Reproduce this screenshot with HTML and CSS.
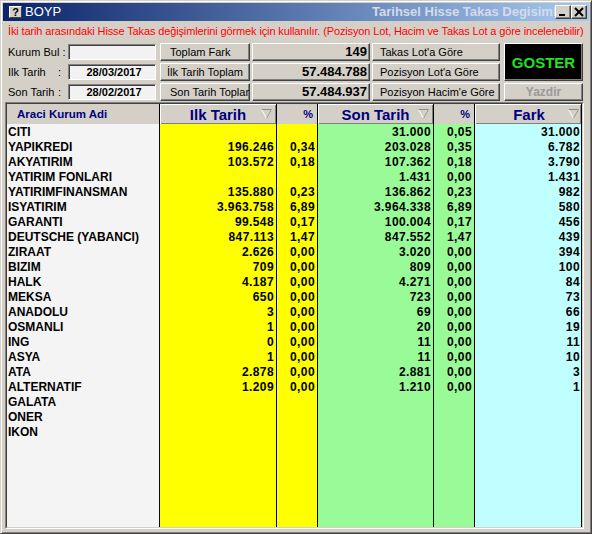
FILE: index.html
```html
<!DOCTYPE html>
<html lang="tr">
<head>
<meta charset="utf-8">
<title>BOYP</title>
<link rel="stylesheet" href="styles.css">
</head>
<body>
<div class="window">
  <div class="titlebar">
    <span class="ticon">?</span>
    <span class="tname">BOYP</span>
    <span class="tspace"></span>
    <span class="tright">Tarihsel Hisse Takas Degisimleri</span>
    <span class="tbtns">
      <span class="tbtn"><svg width="14" height="12" viewBox="0 0 14 12"><rect x="3" y="8" width="6" height="2" fill="#000"/></svg></span>
      <span class="tbtn"><svg width="14" height="12" viewBox="0 0 14 12"><path d="M3 2 L11 10 M11 2 L3 10" stroke="#000" stroke-width="2"/></svg></span>
    </span>
  </div>
  <div class="notice">İki tarih arasındaki Hisse Takas değişimlerini görmek için kullanılır. (Pozisyon Lot, Hacim ve Takas Lot a göre incelenebilir)</div>
  <div class="controls">
    <div class="lbl">Kurum Bul :</div>
    <div class="inp"></div>
    <div class="btn">Toplam Fark</div>
    <div class="val">149</div>
    <div class="opt">Takas Lot'a Göre</div>
    <div class="goster">GOSTER</div>

    <div class="lbl"><span class="lt">Ilk Tarih</span>:</div>
    <div class="inp date">28/03/2017</div>
    <div class="btn b2">İlk Tarih Toplam</div>
    <div class="val">57.484.788</div>
    <div class="opt">Pozisyon Lot'a Göre</div>

    <div class="lbl"><span class="lt">Son Tarih</span>:</div>
    <div class="inp date">28/02/2017</div>
    <div class="btn">Son Tarih Toplam</div>
    <div class="val">57.484.937</div>
    <div class="opt">Pozisyon Hacim'e Göre</div>
    <div class="yazdir">Yazdir</div>
  </div>
  <div class="gridframe">
    <div class="grid">
      <div class="h hn">Araci Kurum Adi</div>
      <div class="h hs"><span class="pad"></span><span class="ht">Ilk Tarih</span><svg class="tri" width="11" height="10" viewBox="0 0 11 10"><path d="M0.5 0.5 H10.5 L5.5 9.5 Z" fill="none" stroke="#fff" stroke-width="1"/><path d="M0.5 0.5 H10.5 L5.5 9.5" fill="none" stroke="#8c8c8c" stroke-width="1"/></svg></div>
      <div class="h hp">%</div>
      <div class="h hs"><span class="pad"></span><span class="ht">Son Tarih</span><svg class="tri" width="11" height="10" viewBox="0 0 11 10"><path d="M0.5 0.5 H10.5 L5.5 9.5 Z" fill="none" stroke="#fff" stroke-width="1"/><path d="M0.5 0.5 H10.5 L5.5 9.5" fill="none" stroke="#8c8c8c" stroke-width="1"/></svg></div>
      <div class="h hp">%</div>
      <div class="h hs hf"><span class="pad"></span><span class="ht">Fark</span><svg class="tri" width="11" height="10" viewBox="0 0 11 10"><path d="M0.5 0.5 H10.5 L5.5 9.5 Z" fill="none" stroke="#fff" stroke-width="1"/><path d="M0.5 0.5 H10.5 L5.5 9.5" fill="none" stroke="#8c8c8c" stroke-width="1"/></svg></div>

      <div class="n">CITI</div><div class="y r"></div><div class="y r"></div><div class="g r">31.000</div><div class="g r">0,05</div><div class="c r">31.000</div>
      <div class="n">YAPIKREDI</div><div class="y r">196.246</div><div class="y r">0,34</div><div class="g r">203.028</div><div class="g r">0,35</div><div class="c r">6.782</div>
      <div class="n">AKYATIRIM</div><div class="y r">103.572</div><div class="y r">0,18</div><div class="g r">107.362</div><div class="g r">0,18</div><div class="c r">3.790</div>
      <div class="n">YATIRIM FONLARI</div><div class="y r"></div><div class="y r"></div><div class="g r">1.431</div><div class="g r">0,00</div><div class="c r">1.431</div>
      <div class="n">YATIRIMFINANSMAN</div><div class="y r">135.880</div><div class="y r">0,23</div><div class="g r">136.862</div><div class="g r">0,23</div><div class="c r">982</div>
      <div class="n">ISYATIRIM</div><div class="y r">3.963.758</div><div class="y r">6,89</div><div class="g r">3.964.338</div><div class="g r">6,89</div><div class="c r">580</div>
      <div class="n">GARANTI</div><div class="y r">99.548</div><div class="y r">0,17</div><div class="g r">100.004</div><div class="g r">0,17</div><div class="c r">456</div>
      <div class="n">DEUTSCHE (YABANCI)</div><div class="y r">847.113</div><div class="y r">1,47</div><div class="g r">847.552</div><div class="g r">1,47</div><div class="c r">439</div>
      <div class="n">ZIRAAT</div><div class="y r">2.626</div><div class="y r">0,00</div><div class="g r">3.020</div><div class="g r">0,00</div><div class="c r">394</div>
      <div class="n">BIZIM</div><div class="y r">709</div><div class="y r">0,00</div><div class="g r">809</div><div class="g r">0,00</div><div class="c r">100</div>
      <div class="n">HALK</div><div class="y r">4.187</div><div class="y r">0,00</div><div class="g r">4.271</div><div class="g r">0,00</div><div class="c r">84</div>
      <div class="n">MEKSA</div><div class="y r">650</div><div class="y r">0,00</div><div class="g r">723</div><div class="g r">0,00</div><div class="c r">73</div>
      <div class="n">ANADOLU</div><div class="y r">3</div><div class="y r">0,00</div><div class="g r">69</div><div class="g r">0,00</div><div class="c r">66</div>
      <div class="n">OSMANLI</div><div class="y r">1</div><div class="y r">0,00</div><div class="g r">20</div><div class="g r">0,00</div><div class="c r">19</div>
      <div class="n">ING</div><div class="y r">0</div><div class="y r">0,00</div><div class="g r">11</div><div class="g r">0,00</div><div class="c r">11</div>
      <div class="n">ASYA</div><div class="y r">1</div><div class="y r">0,00</div><div class="g r">11</div><div class="g r">0,00</div><div class="c r">10</div>
      <div class="n">ATA</div><div class="y r">2.878</div><div class="y r">0,00</div><div class="g r">2.881</div><div class="g r">0,00</div><div class="c r">3</div>
      <div class="n">ALTERNATIF</div><div class="y r">1.209</div><div class="y r">0,00</div><div class="g r">1.210</div><div class="g r">0,00</div><div class="c r">1</div>
      <div class="n">GALATA</div><div class="y r"></div><div class="y r"></div><div class="g r"></div><div class="g r"></div><div class="c r"></div>
      <div class="n">ONER</div><div class="y r"></div><div class="y r"></div><div class="g r"></div><div class="g r"></div><div class="c r"></div>
      <div class="n">IKON</div><div class="y r"></div><div class="y r"></div><div class="g r"></div><div class="g r"></div><div class="c r"></div>

      <div class="n"></div><div class="y"></div><div class="y"></div><div class="g"></div><div class="g"></div><div class="c"></div>
    </div>
  </div>
</div>
</body>
</html>
```
FILE: styles.css
```css
* { box-sizing: border-box; }
html, body { margin: 0; padding: 0; }
body {
  width: 592px;
  height: 534px;
  background: #d4d0c8;
  font-family: "Liberation Sans", Arial, sans-serif;
  overflow: hidden;
}
.window {
  width: 592px;
  height: 534px;
  background: #d4d0c8;
  border: 1px solid;
  border-color: #d4d0c8 #404040 #404040 #d4d0c8;
  box-shadow: inset 1px 1px #fff, inset -1px -1px #808080;
  padding: 2px;
  display: flex;
  flex-direction: column;
}
.titlebar {
  height: 18px;
  flex: none;
  display: flex;
  align-items: center;
  background: linear-gradient(to right, #0a246a, #a6caf0);
  padding-left: 6px;
}
.ticon {
  width: 13px;
  height: 12px;
  background: #d4d0c8;
  border: 1px solid;
  border-color: #fff #404040 #404040 #fff;
  font-size: 11px;
  font-weight: bold;
  line-height: 10px;
  text-align: center;
  color: #000;
}
.tname {
  margin-left: 3px;
  color: #fff;
  font-size: 13px;
  line-height: 18px;
}
.tspace { flex: 1; }
.tright {
  width: 183px;
  overflow: hidden;
  white-space: nowrap;
  color: #d6dbe8;
  font-size: 13px;
  font-weight: bold;
  line-height: 18px;
}
.tbtns {
  display: flex;
  margin-right: 2px;
}
.tbtn {
  width: 16px;
  height: 14px;
  background: #d4d0c8;
  border: 1px solid;
  border-color: #fff #404040 #404040 #fff;
  box-shadow: inset -1px -1px #808080;
  display: flex;
  align-items: center;
  justify-content: center;
}
.tbtn svg { display: block; }
.notice {
  height: 21px;
  flex: none;
  line-height: 20px;
  padding-left: 5px;
  color: #f00;
  font-size: 11px;
  letter-spacing: -0.13px;
  white-space: nowrap;
  overflow: hidden;
}
.controls {
  flex: none;
  margin-top: 1px;
  padding-left: 5px;
  display: grid;
  grid-template-columns: 60px 88px 94px 120px 130px 83px;
  grid-template-rows: 18px 18px 18px;
  row-gap: 2px;
  font-size: 11px;
  color: #000;
}
.lbl {
  line-height: 18px;
  white-space: nowrap;
}
.lt {
  display: inline-block;
  width: 50px;
}
.inp {
  margin: 1px 0;
  background: #f2f2f2;
  border: 1px solid;
  border-color: #808080 #fff #fff #808080;
  box-shadow: inset 1px 1px #404040;
  font-weight: bold;
  text-align: center;
  line-height: 14px;
}
.date { padding-left: 4px; }
.btn, .val, .opt, .yazdir {
  background: #d4d0c8;
  border: 1px solid;
  border-color: #fff #404040 #404040 #fff;
  box-shadow: inset -1px -1px #808080;
  line-height: 16px;
  white-space: nowrap;
  overflow: hidden;
}
.btn { margin-left: 4px; padding-left: 9px; }
.btn.b2 { padding-left: 6px; }
.val {
  margin-left: 2px;
  text-align: right;
  padding-right: 2px;
  font-size: 13px;
  font-weight: bold;
}
.opt { margin-left: 2px; padding-left: 7px; }
.goster {
  grid-column: 6;
  grid-row: 1 / span 2;
  margin-left: 4px;
  background: #000;
  border: 1px solid;
  border-color: #fff #404040 #404040 #fff;
  box-shadow: inset -1px -1px #808080;
  color: #22e022;
  font-size: 15px;
  font-weight: bold;
  display: flex;
  align-items: center;
  justify-content: center;
}
.yazdir {
  grid-column: 6;
  grid-row: 3;
  margin-left: 4px;
  text-align: center;
  font-size: 12px;
  font-weight: bold;
  color: #9a9a9a;
}
.gridframe {
  flex: 1;
  margin: 1px 0 2px 2px;
  width: 579px;
  border: 1px solid;
  border-color: #808080 #fff #fff #808080;
  display: flex;
}
.grid {
  flex: 1;
  border: 1px solid;
  border-color: #404040 #d4d0c8 #d4d0c8 #404040;
  display: grid;
  grid-template-columns: 153px 117px 41px 116px 41px 107px;
  grid-template-rows: 20px repeat(20, 15px) 1fr;
  font-size: 12px;
  font-weight: bold;
  color: #000;
  overflow: hidden;
}
.grid > div {
  border-right: 1px solid #000;
  white-space: nowrap;
  overflow: hidden;
}
.h {
  background: #d4d0c8;
  color: #000080;
  display: flex;
  align-items: center;
}
.hn {
  padding-left: 10px;
  font-size: 11.5px;
  border-right: none !important;
}
.hs {
  box-shadow: inset 1px 1px #fff, inset -1px -1px #808080;
  border-left: 1px solid #000;
  margin-left: -1px;
  font-size: 15px;
}
.hs .pad { width: 15px; flex: none; }
.hs .ht { flex: 1; text-align: center; }
.hs .tri { flex: none; margin-right: 4px; display: block; }
.hf .tri { margin-right: 2px; }
.hp {
  justify-content: flex-end;
  padding-right: 4px;
  font-size: 11px;
}
.n {
  background: #f4f4f4;
  padding-left: 1px;
  line-height: 16px;
}
.y { background: #ffff00; }
.g { background: #98fb98; }
.c { background: #c0ffff; }
.r {
  text-align: right;
  padding-right: 2px;
  line-height: 16px;
  letter-spacing: 0.4px;
}
.c.r { padding-right: 1px; }
```
